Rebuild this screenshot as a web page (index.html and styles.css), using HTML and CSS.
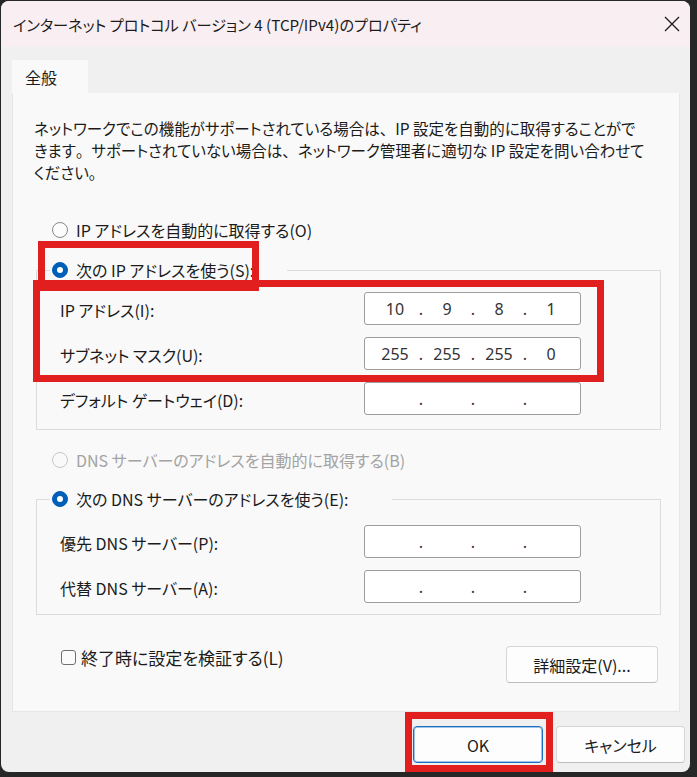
FILE: index.html
```html
<!DOCTYPE html>
<html lang="ja">
<head>
<meta charset="utf-8">
<title>インターネット プロトコル バージョン 4 (TCP/IPv4)のプロパティ</title>
<link rel="stylesheet" href="styles.css">
</head>
<body>
<div class="window">
  <div class="titlebar">
    <span class="title">インターネット プロトコル バージョン 4 (TCP/IPv4)のプロパティ</span>
    <span class="close"><svg width="16" height="16" viewBox="0 0 16 16"><path d="M1 1L15 15M15 1L1 15" stroke="#1c1c1c" stroke-width="1.3" fill="none"/></svg></span>
  </div>
  <div class="main">
    <div class="tabs"><div class="tab">全般</div></div>
    <div class="panel">
      <p class="desc">ネットワークでこの機能がサポートされている場合は<span class="fw">、</span>IP 設定を自動的に取得することがで<br>きます<span class="fw">。</span>サポートされていない場合は<span class="fw">、</span>ネットワーク管理者に適切な IP 設定を問い合わせて<br>ください<span class="fw">。</span></p>
      <div class="radio-row"><span class="radio"></span><span>IP アドレスを自動的に取得する(O)</span></div>
      <fieldset class="group group-ip">
        <legend class="legend legend-ip"><span class="radio checked"></span><span>次の IP アドレスを使う(S):</span></legend>
        <div class="fields">
          <span class="lbl">IP アドレス(I):</span>
          <div class="ipbox"><span class="seg">10</span><span class="dot">.</span><span class="seg">9</span><span class="dot">.</span><span class="seg">8</span><span class="dot">.</span><span class="seg">1</span></div>
          <span class="lbl">サブネット マスク(U):</span>
          <div class="ipbox"><span class="seg">255</span><span class="dot">.</span><span class="seg">255</span><span class="dot">.</span><span class="seg">255</span><span class="dot">.</span><span class="seg">0</span></div>
          <span class="lbl">デフォルト ゲートウェイ(D):</span>
          <div class="ipbox"><span class="seg"></span><span class="dot">.</span><span class="seg"></span><span class="dot">.</span><span class="seg"></span><span class="dot">.</span><span class="seg"></span></div>
        </div>
      </fieldset>
      <div class="radio-row disabled dns-auto"><span class="radio"></span><span>DNS サーバーのアドレスを自動的に取得する(B)</span></div>
      <fieldset class="group group-dns">
        <legend class="legend legend-dns"><span class="radio checked"></span><span>次の DNS サーバーのアドレスを使う(E):</span></legend>
        <div class="fields">
          <span class="lbl">優先 DNS サーバー(P):</span>
          <div class="ipbox"><span class="seg"></span><span class="dot">.</span><span class="seg"></span><span class="dot">.</span><span class="seg"></span><span class="dot">.</span><span class="seg"></span></div>
          <span class="lbl">代替 DNS サーバー(A):</span>
          <div class="ipbox"><span class="seg"></span><span class="dot">.</span><span class="seg"></span><span class="dot">.</span><span class="seg"></span><span class="dot">.</span><span class="seg"></span></div>
        </div>
      </fieldset>
      <div class="panel-bottom">
        <div class="check-row"><span class="checkbox"></span><span class="check-text">終了時に設定を検証する(L)</span></div>
        <button class="btn btn-adv">詳細設定(V)...</button>
      </div>
    </div>
  </div>
  <div class="footer">
    <button class="btn btn-ok">OK</button>
    <button class="btn btn-cancel">キャンセル</button>
  </div>
  <div class="mark mark-radio"></div>
  <div class="mark mark-fields"></div>
  <div class="mark mark-ok"></div>
</div>
</body>
</html>
```

FILE: styles.css
```css
* { box-sizing: border-box; }
html, body { margin: 0; padding: 0; }
body {
  width: 697px;
  height: 777px;
  overflow: hidden;
  background: #272727;
  font-family: "Noto Sans CJK JP", "Noto Sans", sans-serif;
  font-feature-settings: "palt";
  color: #1b1b1b;
  font-size: 16px;
}
.window {
  position: relative;
  margin: 1px 0 0 1px;
  width: 689px;
  height: 771px;
  background: #f0f0f0;
  border-radius: 8px;
  overflow: hidden;
  display: flex;
  flex-direction: column;
}
.titlebar {
  height: 46px;
  flex: none;
  background: #f9eef1;
  display: flex;
  align-items: center;
  padding-left: 12px;
}
.title { font-size: 15.2px; }
.close {
  margin-left: auto;
  width: 36px;
  height: 46px;
  display: flex;
  align-items: center;
  justify-content: center;
}
.main {
  padding: 13px 10px 0 11px;
  display: flex;
  flex-direction: column;
}
.tabs { display: flex; }
.tab {
  width: 76px;
  height: 33px;
  background: #f9f9f9;
  padding-left: 13px;
  display: flex;
  align-items: center;
  font-size: 16px;
}
.panel {
  height: 619px;
  background: #f9f9f9;
  border: 1px solid #e6e6e6;
  border-top-color: #f9f9f9;
  padding: 23px 19px 0 21px;
  display: flex;
  flex-direction: column;
}
.desc {
  margin: 0;
  line-height: 22px;
  font-size: 15.5px;
  white-space: nowrap;
}
.fw { font-feature-settings: normal; }
.radio-row {
  margin-top: 36px;
  height: 22px;
  display: flex;
  align-items: center;
  gap: 8px;
  padding-left: 18px;
}
.radio-row.disabled { color: #a3a3a3; }
.radio-row.dns-auto { margin-top: 19px; }
.radio {
  width: 16px;
  height: 16px;
  border-radius: 50%;
  border: 1px solid #878787;
  background: #fcfcfc;
  flex: none;
  position: relative;
}
.disabled .radio { border-color: #c8c8c8; background: #f9f9f9; }
.radio.checked {
  background: #005fb8;
  border-color: #005fb8;
}
.radio.checked::after {
  content: "";
  position: absolute;
  left: 4px;
  top: 4px;
  width: 6px;
  height: 6px;
  border-radius: 50%;
  background: #ffffff;
}
.group {
  margin: 18px 0 0 2px;
  width: 625px;
  border: 1px solid #dcdcdc;
  padding: 11px 0 14px 23px;
  min-width: 0;
}
.group-dns {
  margin-top: 17px;
  padding-top: 15px;
  padding-bottom: 11px;
}
.legend {
  padding: 0;
  margin-left: -10px;
  height: 22px;
  display: flex;
  align-items: center;
  gap: 8px;
  padding-left: 2px;
  background: #f9f9f9;
}
.legend-ip { width: 237px; }
.legend-dns { width: 342px; }
.fields {
  display: grid;
  grid-template-columns: 304px 217px;
  row-gap: 12px;
  align-items: center;
}
.lbl { font-size: 16px; padding-top: 2px; }
.ipbox {
  height: 33px;
  border: 1px solid #9d9d9d;
  border-radius: 3px;
  background: #ffffff;
  display: flex;
  align-items: center;
  padding-left: 8px;
  font-size: 16px;
  color: #333333;
  font-family: "Noto Sans", "Noto Sans CJK JP", sans-serif;
}
.seg { width: 44px; text-align: center; }
.dot { width: 8px; text-align: center; }
.panel-bottom {
  margin-top: 31px;
  display: flex;
  justify-content: space-between;
  align-items: flex-start;
}
.check-row {
  margin-left: 27px;
  height: 22px;
  display: flex;
  align-items: center;
  gap: 5px;
}
.check-text { font-size: 17px; }
.checkbox {
  width: 15px;
  height: 15px;
  border: 1px solid #6f6f6f;
  border-radius: 3px;
  background: #fbfbfb;
}
.btn {
  font-family: "Noto Sans CJK JP", "Noto Sans", sans-serif;
  font-feature-settings: "palt";
  font-size: 16px;
  color: #1b1b1b;
  height: 37px;
  background: #fdfdfd;
  border: 1px solid #d6d6d6;
  border-bottom-color: #bdbdbd;
  border-radius: 4px;
  padding: 0;
}
.btn-adv { width: 152px; margin-right: 2px; }
.footer {
  padding: 14px 5px 0 0;
  display: flex;
  justify-content: flex-end;
  gap: 13px;
}
.btn-ok {
  width: 130px;
  border: 1px solid #1a6fc2;
  box-shadow: inset 0 0 0 1px #9fc4e8;
}
.btn-cancel { width: 129px; }
.mark {
  position: absolute;
  border: 7px solid #e21f1f;
}
.mark-radio { left: 37px; top: 240px; width: 221px; height: 50px; }
.mark-fields { left: 32px; top: 279px; width: 571px; height: 102px; }
.mark-ok { left: 404px; top: 711px; width: 148px; height: 60px; }
```
